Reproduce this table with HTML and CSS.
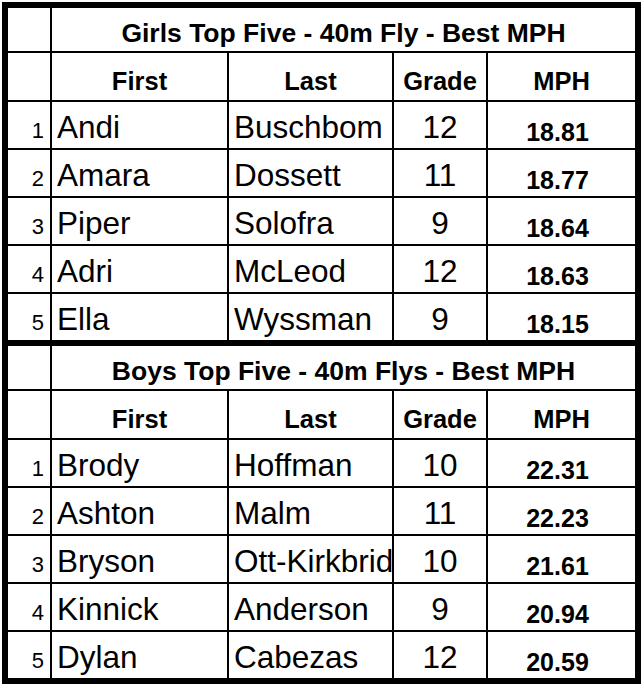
FILE: index.html
```html
<!DOCTYPE html>
<html>
<head>
<meta charset="utf-8">
<link rel="stylesheet" href="styles.css">
</head>
<body>
<div class="sheet">
  <div class="section">
    <div class="cell"></div>
    <div class="cell title">Girls Top Five - 40m Fly - Best MPH</div>
    <div class="cell hdr-row"></div>
    <div class="cell hdr hdr-row">First</div>
    <div class="cell hdr hdr-row">Last</div>
    <div class="cell hdr hdr-row">Grade</div>
    <div class="cell hdr hdr-row">MPH</div>

    <div class="cell num">1</div><div class="cell name">Andi</div><div class="cell name">Buschbom</div><div class="cell grade">12</div><div class="cell mph">18.81</div>
    <div class="cell num">2</div><div class="cell name">Amara</div><div class="cell name">Dossett</div><div class="cell grade">11</div><div class="cell mph">18.77</div>
    <div class="cell num">3</div><div class="cell name">Piper</div><div class="cell name">Solofra</div><div class="cell grade">9</div><div class="cell mph">18.64</div>
    <div class="cell num">4</div><div class="cell name">Adri</div><div class="cell name">McLeod</div><div class="cell grade">12</div><div class="cell mph">18.63</div>
    <div class="cell num">5</div><div class="cell name">Ella</div><div class="cell name">Wyssman</div><div class="cell grade">9</div><div class="cell mph">18.15</div>
  </div>
  <div class="section">
    <div class="cell"></div>
    <div class="cell title">Boys Top Five - 40m Flys - Best MPH</div>
    <div class="cell hdr-row"></div>
    <div class="cell hdr hdr-row">First</div>
    <div class="cell hdr hdr-row">Last</div>
    <div class="cell hdr hdr-row">Grade</div>
    <div class="cell hdr hdr-row">MPH</div>

    <div class="cell num">1</div><div class="cell name">Brody</div><div class="cell name">Hoffman</div><div class="cell grade">10</div><div class="cell mph">22.31</div>
    <div class="cell num">2</div><div class="cell name">Ashton</div><div class="cell name">Malm</div><div class="cell grade">11</div><div class="cell mph">22.23</div>
    <div class="cell num">3</div><div class="cell name">Bryson</div><div class="cell name">Ott-Kirkbride</div><div class="cell grade">10</div><div class="cell mph">21.61</div>
    <div class="cell num">4</div><div class="cell name">Kinnick</div><div class="cell name">Anderson</div><div class="cell grade">9</div><div class="cell mph">20.94</div>
    <div class="cell num">5</div><div class="cell name">Dylan</div><div class="cell name">Cabezas</div><div class="cell grade">12</div><div class="cell mph">20.59</div>
  </div>
</div>
</body>
</html>
```

FILE: styles.css
```css
html, body {
  margin: 0;
  padding: 0;
  background: #ffffff;
}
body {
  padding: 2px 0 0 2px;
  font-family: "Liberation Sans", Arial, Helvetica, sans-serif;
  color: #000;
}
.sheet {
  width: 627px;
  border: 6px solid #000;
  background: #000;
  display: flex;
  flex-direction: column;
  gap: 6px;
}
.section {
  display: grid;
  grid-template-columns: 42px 175px 163px 92px 147px;
  grid-template-rows: 43px 47px repeat(5, 46px);
  gap: 2px;
  background: #000;
}
.cell {
  background: #fff;
  display: flex;
  align-items: flex-end;
  overflow: hidden;
  white-space: nowrap;
  line-height: 1;
}
.title {
  grid-column: 2 / span 4;
  justify-content: center;
  font-weight: bold;
  font-size: 26.5px;
  padding-bottom: 5px;
}
.hdr {
  justify-content: center;
  font-weight: bold;
  font-size: 25.5px;
  padding-bottom: 6px;
}
.num {
  justify-content: flex-end;
  font-size: 22px;
  padding: 0 6px 6px 0;
}
.name {
  font-size: 31.5px;
  padding: 0 0 5px 5px;
}
.grade {
  justify-content: center;
  font-size: 31.5px;
  padding-bottom: 5px;
}
.mph {
  justify-content: center;
  font-weight: bold;
  font-size: 25px;
  padding: 0 8px 3px 0;
}
```
